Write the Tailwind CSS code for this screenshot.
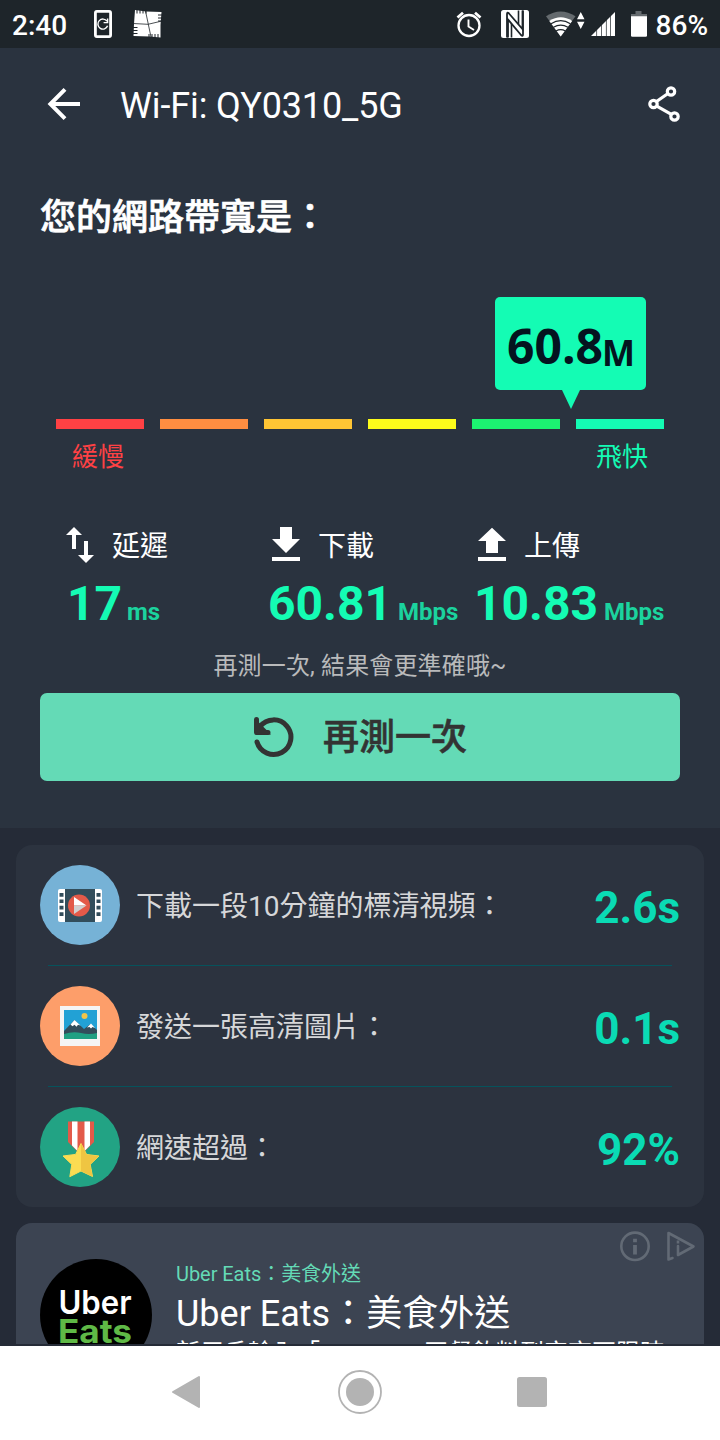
<!DOCTYPE html>
<html lang="zh-Hant">
<head>
    <meta charset="UTF-8">
    <title>Wi-Fi: QY0310_5G</title>
    <script src="https://cdn.jsdelivr.net/npm/@tailwindcss/browser@4"></script>
</head>
<body class="bg-[#252b37] font-['Roboto','Noto_Sans_CJK_TC',sans-serif]">
<div class="w-[720px] h-[1440px] flex flex-col overflow-hidden">
    <!-- Status bar -->
    <div class="h-12 shrink-0 bg-[#1e252a] flex items-center text-white text-[28px] font-medium leading-none pl-3 pr-3">
        <span class="w-[82px] pt-[3px]">2:40</span>
        <svg class="w-[18px] h-12" viewBox="0 0 18 48" fill="none" stroke="#fff">
            <rect x="1.4" y="11.4" width="15.2" height="25.2" rx="1.5" stroke-width="2.8"/>
            <path d="M13 21.2a5 5 0 1 0 .6 4.6" stroke-width="1.4"/>
            <path d="M9.6 22.6h4v-4" stroke-width="1.4"/>
        </svg>
        <svg class="w-[30px] h-12 ml-[21px]" viewBox="0 0 30 48">
            <path d="M2 10l11 1.500L28.500 12l-1 13 0 12.500-11-1L.5 36l.5-12z" fill="#fff"/>
            <path d="M4 9.500v4M7 9.500v4M10 9.500v4M13 9.500v4M29.500 15h-4.500M29.500 18h-4.500M29.500 21h-4.500M0 27.500h4.500M0 30.500h4.500M0 33.500h4.500M16 38v-4M19 38v-4M22 38v-4M25 38v-4" stroke="#1e252a" stroke-width="1"/>
            <path d="M12.500 11l5.500 26M0 23.500l15 .8L29 21" stroke="#1e252a" stroke-width=".8" fill="none"/>
        </svg>
        <div class="ml-auto flex items-center">
            <svg class="w-[26px] h-12" viewBox="0 0 26 48" fill="none" stroke="#fff">
                <circle cx="13" cy="25.500" r="10.500" stroke-width="2.300"/>
                <path d="M1.500 17.500l5.500-4.700M24.500 17.500L19 12.800" stroke-width="2.800"/>
                <path d="M12.500 19.500v7l5.500 3.500" stroke-width="1.900"/>
            </svg>
            <svg class="w-7 h-12 ml-[19px]" viewBox="0 0 28 48">
                <rect y="10" width="28" height="28" rx="2.500" fill="#fff"/>
                <path d="M6 37.500V14q0-2.500 2-.5L21.500 29V10.500" fill="none" stroke="#1e252a" stroke-width="1.800"/>
                <path d="M7 37.500V19.500L20 35q2 2 2-.5V10.500" fill="none" stroke="#1e252a" stroke-width="1.800"/>
                <path d="M10.500 24v13.500M17.500 10.500V24" fill="none" stroke="#1e252a" stroke-width="1.600"/>
            </svg>
            <svg class="w-[40px] h-12 ml-[17px]" viewBox="0 0 40 48">
                <path d="M0 16.300Q14.700 6.500 29.500 16.300L14.700 36.500z" fill="#646a6e"/>
                <path d="M3.300 21Q14.700 13.500 26.200 21L14.700 36.500z" fill="#fff"/>
                <path d="M5 23.700q9.700-6 19.400 0M7.500 27.300q7.200-4.300 14.400 0M10 31q4.700-2.800 9.400 0" fill="none" stroke="#1e252a" stroke-width="1.200"/>
                <path d="M31 19.300h7.500L34.750 12zM31 21.800h7.500L34.750 29z" fill="#fff"/>
            </svg>
            <svg class="w-[25px] h-12 ml-[5px]" viewBox="0 0 25 48">
                <path d="M0 36L24 12v24z" fill="#fff"/>
                <path d="M5.600 28v8M10.500 22v14M15.400 18v18M19.500 14v22" stroke="#1e252a" stroke-width=".7"/>
            </svg>
            <svg class="w-4 h-12 ml-[15px]" viewBox="0 0 16 48">
                <path d="M0 17v-3h4.500v-3h6v3H16v3z" fill="#646a6e"/>
                <path d="M0 16.300h16V35.500q0 1.300-1.300 1.300H1.300Q0 36.800 0 35.500z" fill="#fff"/>
            </svg>
            <span class="ml-[9px] pt-[3px]">86%</span>
        </div>
    </div>

    <!-- Speed result -->
    <div class="h-[780px] shrink-0 bg-[#2a333f] flex flex-col">
        <header class="h-28 shrink-0 flex items-center text-white pl-10 pr-8">
            <svg class="w-12 h-12" viewBox="0 0 24 24" fill="none" stroke="#fff" stroke-width="2">
                <path d="M20 12H5.200M12.500 4.700L5.200 12l7.300 7.300"/>
            </svg>
            <h1 class="text-[36px] leading-[48px] tracking-[-0.12px] ml-8 pt-[4px]">Wi-Fi: QY0310_5G</h1>
            <svg class="w-12 h-12 ml-auto" viewBox="0 0 48 48" fill="none" stroke="#fff" stroke-width="3.200">
                <path d="M28 13.500L16.500 21.500M16.800 26.200l15 8.500"/>
                <circle cx="31" cy="11.500" r="3.700"/>
                <circle cx="13.500" cy="24" r="3.700"/>
                <circle cx="34.500" cy="36.500" r="3.700"/>
            </svg>
        </header>
        <h2 class="h-[137px] shrink-0 pt-[34px] pl-10 text-[36px] leading-[48px] font-medium [-webkit-text-stroke:0.7px_#fff] text-white">您的網路帶寬是：</h2>

        <!-- Gauge -->
        <div class="w-[151px] ml-[495px] shrink-0 flex flex-col items-center">
            <div class="w-full h-[93px] bg-[#14fcb4] rounded-[5px] text-[#04141f] font-['Open_Sans',sans-serif] font-bold leading-[93px] pl-3 pt-[2px] flex items-baseline">
                <span class="text-[48px]">60.8</span><span class="text-[35px] leading-none relative top-[2px] -left-px">M</span>
            </div>
            <svg class="w-[18px] h-[19px]" viewBox="0 0 18 19" fill="#14fcb4"><path d="M0 0h18L9 19z"/></svg>
        </div>
        <div class="flex gap-4 px-14 mt-[10px] shrink-0">
            <div class="h-[10px] flex-1 bg-[#ff4144]"></div>
            <div class="h-[10px] flex-1 bg-[#ff8e41]"></div>
            <div class="h-[10px] flex-1 bg-[#ffc534]"></div>
            <div class="h-[10px] flex-1 bg-[#fdfc1b]"></div>
            <div class="h-[10px] flex-1 bg-[#1cf371]"></div>
            <div class="h-[10px] flex-1 bg-[#14fcb4]"></div>
        </div>
        <div class="h-[92px] shrink-0 flex justify-between px-[72px] pt-[12px] text-[26px] leading-8">
            <span class="text-[#ff4144]">緩慢</span>
            <span class="text-[#14fcb4]">飛快</span>
        </div>

        <!-- Latency / download / upload -->
        <div class="flex pl-14 shrink-0 text-white">
            <div class="w-[206px]">
                <div class="flex items-center gap-2 text-[28px] leading-[48px] h-12">
                    <svg class="w-12 h-12" viewBox="0 0 24 24" fill="#fff"><path d="M16 17.010V10h-2v7.010h-3L15 21l4-3.990h-3zM9 3L5 6.990h3V14h2V6.990h3L9 3z"/></svg>
                    <span class="pt-1">延遲</span>
                </div>
                <div class="flex items-baseline pl-[11px] h-[75px] font-bold text-[#14fcb4]">
                    <span class="text-[48px] leading-[69px]">17</span><span class="text-[24px] ml-[5px] text-[#1bd39e]">ms</span>
                </div>
            </div>
            <div class="w-[206px]">
                <div class="flex items-center gap-2 text-[28px] leading-[48px] h-12">
                    <svg class="w-12 h-12" viewBox="0 0 24 24" fill="#fff"><path d="M19 9h-4V3H9v6H5l7 7 7-7zM5 18v2h14v-2H5z"/></svg>
                    <span class="pt-1">下載</span>
                </div>
                <div class="flex items-baseline pl-[6px] h-[75px] font-bold text-[#14fcb4]">
                    <span class="text-[48px] leading-[69px]">60.81</span><span class="text-[24px] ml-[6px] text-[#1bd39e]">Mbps</span>
                </div>
            </div>
            <div class="w-[206px]">
                <div class="flex items-center gap-2 text-[28px] leading-[48px] h-12">
                    <svg class="w-12 h-12" viewBox="0 0 24 24" fill="#fff"><path d="M9 16h6v-6h4l-7-6.600L5 10h4zm-4 2h14v2H5z"/></svg>
                    <span class="pt-1">上傳</span>
                </div>
                <div class="flex items-baseline pl-[6px] h-[75px] font-bold text-[#14fcb4]">
                    <span class="text-[48px] leading-[69px]">10.83</span><span class="text-[24px] ml-[6px] text-[#1bd39e]">Mbps</span>
                </div>
            </div>
        </div>
        <p class="h-[49px] shrink-0 pt-[6px] text-center text-[24px] leading-[32px] tracking-[0.15px] text-[#b9babb]">再測一次, 結果會更準確哦~</p>
        <button class="h-[88px] w-[640px] mx-auto shrink-0 bg-[#64dab6] rounded-[7px] flex items-center justify-center gap-7 text-[36px] font-medium [-webkit-text-stroke:0.6px_#333] text-[#333]">
            <svg class="w-[42px] h-[42px]" viewBox="0 0 42 42" fill="none" stroke="#333" stroke-width="5" stroke-linecap="round">
                <path d="M4 26a17.300 17.300 0 1 0 3-15.500"/>
                <path d="M3.500 3.500v13h11.500" stroke-linejoin="round"/>
                <path d="M5 9v7h7z" fill="#333"/>
            </svg>
            <span class="pt-[2px]">再測一次</span>
        </button>
    </div>

    <!-- Details card -->
    <div class="mx-4 mt-[17px] h-[362px] shrink-0 rounded-[16px] bg-[#2c333f] px-6 text-[28px] text-[#d6d7d9]">
        <div class="h-[120px] flex items-center">
            <svg class="w-20 h-20" viewBox="0 0 80 80">
                <circle cx="40" cy="40" r="40" fill="#76b2d6"/>
                <rect x="18" y="24" width="44" height="33" rx="2" fill="#fff"/>
                <rect x="25" y="24" width="30" height="33" fill="#324d5b"/>
                <path d="M21.500 28v25M58.500 28v25" stroke="#324d5b" stroke-width="4" stroke-dasharray="3.700 2.700"/>
                <circle cx="39" cy="40.500" r="11" fill="#e35a49"/>
                <path d="M34 32l12.500 8.500H34z" fill="#fff"/>
                <path d="M34 49l12.500-8.500H34z" fill="#d0d0d0"/>
            </svg>
            <span class="ml-4 pt-1">下載一段10分鐘的標清視頻：</span>
            <span class="ml-auto pt-[5px] text-[44px] font-bold text-[#0adbb4]">2.6s</span>
        </div>
        <div class="h-px mx-2 bg-[#06535c]"></div>
        <div class="h-[120px] flex items-center">
            <svg class="w-20 h-20" viewBox="0 0 80 80">
                <circle cx="40" cy="40" r="40" fill="#fd9e6a"/>
                <rect x="20" y="20" width="40" height="40" fill="#f5f5f5"/>
                <rect x="24" y="24" width="33" height="29" fill="#22a1d5"/>
                <circle cx="44.500" cy="30" r="3" fill="#f0c54a"/>
                <path d="M24 45l10.500-11L44 43l6.500-5L57 44v6H24z" fill="#324d5b"/>
                <path d="M30.500 38.500l4-4.500 6 5.500-2.500-.8-1.500 2-2-2-2 1.500zM47 41.500l4-4 4 4.500-2.500-1-1.500 1.500-1.500-1.500z" fill="#fff"/>
                <path d="M24 48q9-3 17-1t16 0v6H24z" fill="#1fa083"/>
            </svg>
            <span class="ml-4 pt-1">發送一張高清圖片：</span>
            <span class="ml-auto pt-[5px] text-[44px] font-bold text-[#0adbb4]">0.1s</span>
        </div>
        <div class="h-px mx-2 bg-[#06535c]"></div>
        <div class="h-[120px] flex items-center">
            <svg class="w-20 h-20" viewBox="0 0 80 80">
                <circle cx="40" cy="40" r="40" fill="#22a384"/>
                <path d="M28 14.500h26V35l-9 9h-8l-9-9z" fill="#e35a49"/>
                <path d="M32 14.500h5.500V44L32 38.500zM44.500 14.500H50v24L44.500 44z" fill="#fff"/>
                <path d="M41 36.500l5.600 11 12.400 1.500-8.800 8.400 2.300 12.100L41 64l-11.200 5.700 2-12.300L23 49l12.600-1.600z" fill="#fbdc52" stroke="#fbdc52" stroke-linejoin="round"/>
                <path d="M41 36.500l5.600 11 12.400 1.500-8.800 8.400 2.300 12.100L41 64z" fill="#efc542"/>
            </svg>
            <span class="ml-4 pt-1">網速超過：</span>
            <span class="ml-auto pt-[5px] text-[44px] font-bold text-[#0adbb4]">92%</span>
        </div>
    </div>

    <!-- Ad, runs on below the fold -->
    <div class="h-[137px] shrink-0 px-4 pt-4 overflow-hidden">
        <div class="relative h-[220px] rounded-[16px] bg-[#3c4452] pl-6 pt-9 flex">
            <svg class="w-28 h-28 shrink-0" viewBox="0 0 112 112" font-family="Inter, sans-serif" font-size="33">
                <circle cx="56" cy="56" r="56" fill="#000"/>
                <text x="18.500" y="54.500" font-weight="600" fill="#fff" textLength="73" lengthAdjust="spacingAndGlyphs">Uber</text>
                <text x="18" y="84" font-weight="700" fill="#5fb946" textLength="74" lengthAdjust="spacingAndGlyphs">Eats</text>
            </svg>
            <div class="ml-6 text-white whitespace-nowrap">
                <p class="text-[20px] leading-[30px] tracking-[-0.05px] text-[#64dab6]">Uber Eats：美食外送</p>
                <p class="text-[36px] leading-[48px] pt-px">Uber Eats：美食外送</p>
                <p class="text-[24px] leading-[30px]">新用戶輸入「<span class="inline-block w-20">EATS18</span>」正餐飲料到宵夜不限時</p>
            </div>
            <svg class="absolute right-2 top-2 w-[78px] h-8" viewBox="0 0 78 32" fill="none" stroke="#626a75" stroke-width="2.600">
                <circle cx="17" cy="15.300" r="13.700"/>
                <path d="M17 14v9.500M17 7.800v3.500" stroke-width="3.800"/>
                <path d="M54.500 27l-4 1.500V2l25 13.500L60 24V15" stroke-linejoin="round" stroke-linecap="round"/>
                <path d="M60 9.500v3"/>
            </svg>
        </div>
    </div>

    <!-- Navigation bar -->
    <div class="h-[94px] shrink-0 mt-[2px] bg-white">
        <svg class="w-[720px] h-[94px]" viewBox="0 0 720 94" fill="#b3b3b3">
            <path d="M173 46L199 31v30z" stroke="#b3b3b3" stroke-width="2" stroke-linejoin="round"/>
            <circle cx="360" cy="46" r="21" fill="none" stroke="#b3b3b3" stroke-width="1.800"/>
            <circle cx="360" cy="46" r="14"/>
            <rect x="517" y="31" width="30" height="30" rx="2.500"/>
        </svg>
    </div>
</div>
</body>
</html>
